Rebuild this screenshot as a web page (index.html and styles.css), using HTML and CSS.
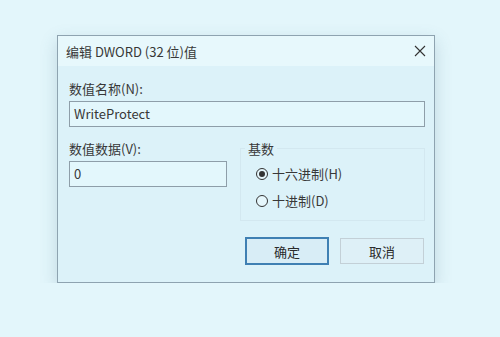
FILE: index.html
```html
<!DOCTYPE html>
<html lang="zh-CN">
<head>
    <meta charset="UTF-8">
    <title>编辑 DWORD (32 位)值</title>
    <link rel="stylesheet" href="styles.css">
</head>
<body>
    <div class="dialog">
        <div class="titlebar">
            <span class="title">编辑 DWORD (32 位)值</span>
            <svg class="close" width="12" height="12" viewBox="0 0 12 12">
                <path d="M1 1 L11 11 M11 1 L1 11" stroke="#333" stroke-width="1.1" fill="none"/>
            </svg>
        </div>
        <div class="content">
            <label class="label">数值名称(N):</label>
            <div class="input wide">WriteProtect</div>

            <div class="row">
                <div class="col">
                    <label class="label">数值数据(V):</label>
                    <div class="input narrow">0</div>
                </div>
                <fieldset class="group">
                    <legend>基数</legend>
                    <div class="radio"><span class="dot checked"></span>十六进制(H)</div>
                    <div class="radio"><span class="dot"></span>十进制(D)</div>
                </fieldset>
            </div>

            <div class="buttons">
                <button class="btn primary">确定</button>
                <button class="btn">取消</button>
            </div>
        </div>
    </div>
</body>
</html>
```

FILE: styles.css
```css
body { margin: 0; background: #e3f6fb; font-family: "Noto Sans CJK SC", "Noto Sans", sans-serif; font-size: 13px; color: #383838; }
.dialog { width: 378px; height: 248px; margin: 35px 0 0 57px; box-sizing: border-box; border: 1px solid #8ea3b0; background: #dcf2f9; box-shadow: 0 6px 16px rgba(70, 110, 130, 0.22); }
.titlebar { height: 30px; display: flex; align-items: center; justify-content: space-between; padding: 0 8px 0 8px; background: #e7f8fc; }
.title { line-height: 17px; }
.close { display: block; }
.content { padding: 14px 9px 0 11px; }
.label { display: block; line-height: 17px; }
.input { box-sizing: border-box; height: 26px; margin-top: 4px; padding: 0 4px; line-height: 24px; border: 1px solid #8e9ea9; background: #e3f7fc; }
.wide { width: 356px; }
.narrow { width: 158px; }
.row { display: grid; grid-template-columns: 158px 185px; gap: 13px; margin-top: 13px; }
.group { margin: 0; padding: 0 0 11px 15px; border: 1px solid #d3e8f0; min-width: 0; }
.group legend { margin-left: -11px; padding: 0 3px; line-height: 17px; }
.radio { display: flex; align-items: center; line-height: 17px; margin-top: 8px; }
.radio + .radio { margin-top: 10px; }
.dot { position: relative; width: 12px; height: 12px; box-sizing: border-box; border: 1px solid #333; border-radius: 50%; margin-right: 4px; background: #e6f7fc; }
.dot.checked::after { content: ""; position: absolute; left: 2px; top: 2px; width: 6px; height: 6px; border-radius: 50%; background: #333; }
.buttons { display: flex; justify-content: flex-end; align-items: center; gap: 11px; margin-top: 16px; padding-right: 1px; }
.btn { width: 84px; height: 26px; padding: 0; font: inherit; color: #2a2a2a; border: 1px solid #c3d0d7; background: #def0f7; }
.btn.primary { height: 28px; border: 2px solid #3f80b3; background: #d8edf6; }
```
